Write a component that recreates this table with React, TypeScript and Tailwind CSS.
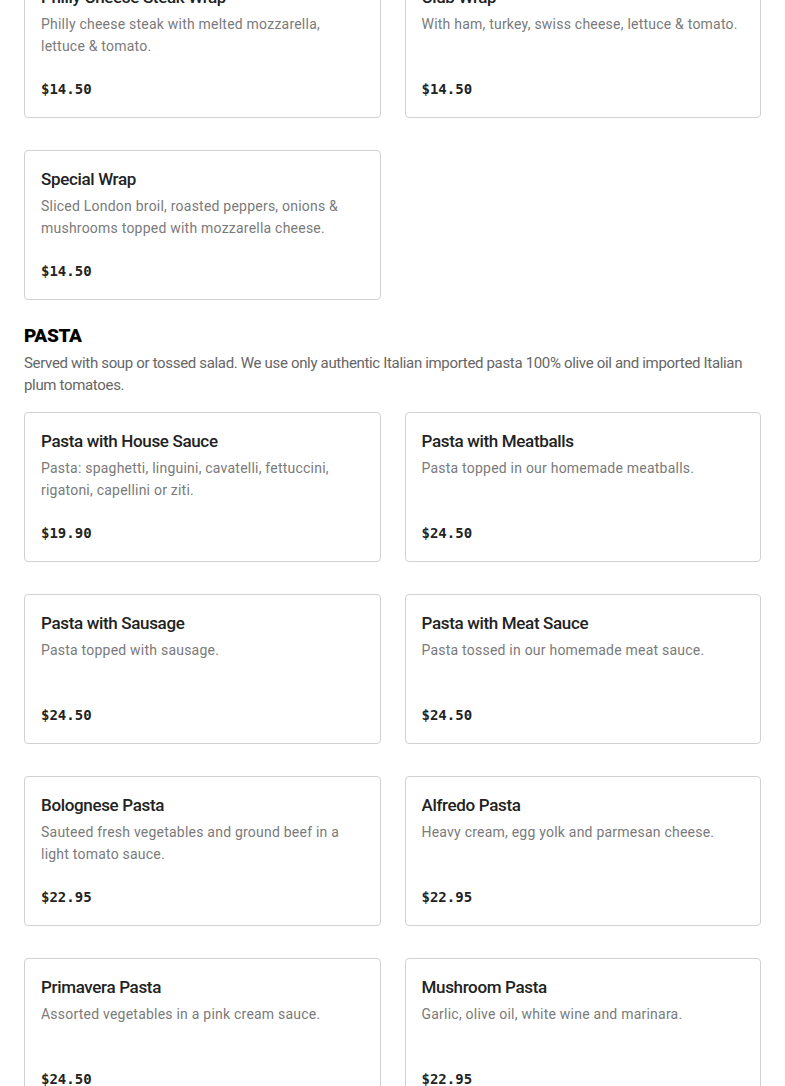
const wraps = [
  {
    name: "Philly Cheese Steak Wrap",
    desc: "Philly cheese steak with melted mozzarella, lettuce & tomato.",
    price: "$14.50",
  },
  {
    name: "Club Wrap",
    desc: "With ham, turkey, swiss cheese, lettuce & tomato.",
    price: "$14.50",
  },
  {
    name: "Special Wrap",
    desc: "Sliced London broil, roasted peppers, onions & mushrooms topped with mozzarella cheese.",
    price: "$14.50",
  },
];

const pasta = [
  {
    name: "Pasta with House Sauce",
    desc: "Pasta: spaghetti, linguini, cavatelli, fettuccini, rigatoni, capellini or ziti.",
    price: "$19.90",
  },
  { name: "Pasta with Meatballs", desc: "Pasta topped in our homemade meatballs.", price: "$24.50" },
  { name: "Pasta with Sausage", desc: "Pasta topped with sausage.", price: "$24.50" },
  { name: "Pasta with Meat Sauce", desc: "Pasta tossed in our homemade meat sauce.", price: "$24.50" },
  {
    name: "Bolognese Pasta",
    desc: "Sauteed fresh vegetables and ground beef in a light tomato sauce.",
    price: "$22.95",
  },
  { name: "Alfredo Pasta", desc: "Heavy cream, egg yolk and parmesan cheese.", price: "$22.95" },
  { name: "Primavera Pasta", desc: "Assorted vegetables in a pink cream sauce.", price: "$24.50" },
  { name: "Mushroom Pasta", desc: "Garlic, olive oil, white wine and marinara.", price: "$22.95" },
];

type Item = { name: string; desc: string; price: string };

const MenuCard = ({ item }: { item: Item }) => (
  <div className="flex h-[150px] flex-col rounded-[4px] border border-[#d2d2d2] bg-white px-4 pt-4">
    <h3 className="font-['Roboto',sans-serif] text-[17px] font-medium leading-6 tracking-[-0.02em] text-[#222]">
      {item.name}
    </h3>
    <p className="mt-[4px] min-h-[44px] font-['Roboto',sans-serif] text-[14px] leading-[22px] tracking-[0.016em] text-[#7a7a7a]">
      {item.desc}
    </p>
    <span className="mt-[21px] font-['DejaVu_Sans_Mono',monospace] text-[14px] font-bold leading-[22px] text-[#222]">
      {item.price}
    </span>
  </div>
);

export default function App() {
  return (
    <div className="min-h-screen overflow-hidden bg-white px-6">
      {/* Wraps (scrolled partly out of view) */}
      <div className="-mt-[32px] grid grid-cols-2 gap-x-6 gap-y-8">
        {wraps.map((w) => (
          <MenuCard key={w.name} item={w} />
        ))}
      </div>

      {/* Pasta */}
      <section className="mt-[24px]">
        <h2 className="font-['Roboto',sans-serif] text-[19px] font-black leading-6 tracking-[-0.02em] text-black">
          PASTA
        </h2>
        <p className="mt-[4px] font-['Roboto',sans-serif] text-[15px] leading-[22px] tracking-[-0.022em] text-[#666]">
          Served with soup or tossed salad. We use only authentic Italian imported pasta 100% olive oil and imported Italian plum tomatoes.
        </p>
        <div className="mt-[16px] grid grid-cols-2 gap-x-6 gap-y-8">
          {pasta.map((p) => (
            <MenuCard key={p.name} item={p} />
          ))}
        </div>
      </section>
    </div>
  );
}
